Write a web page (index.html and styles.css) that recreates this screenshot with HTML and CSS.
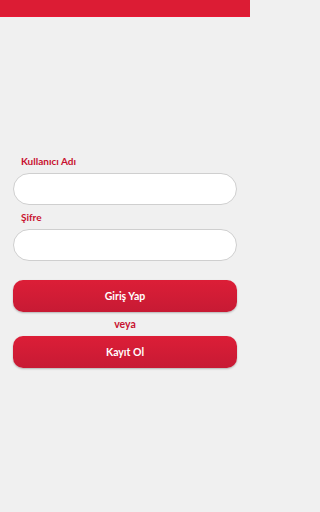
FILE: index.html
```html
<!DOCTYPE html>
<html lang="tr">
<head>
<meta charset="utf-8">
<meta name="viewport" content="width=device-width, initial-scale=1">
<link rel="stylesheet" href="styles.css">
</head>
<body>
<div class="page">
  <header class="topbar"></header>
  <main class="form">
    <label class="label" for="user">Kullanıcı Adı</label>
    <input class="field" id="user" type="text">
    <label class="label label-2" for="pass">Şifre</label>
    <input class="field" id="pass" type="password">
    <button class="btn btn-login">Giriş Yap</button>
    <div class="or">veya</div>
    <button class="btn">Kayıt Ol</button>
  </main>
</div>
</body>
</html>
```
FILE: styles.css
```css
html, body {
  margin: 0;
  padding: 0;
  background: #f0f0f0;
  height: 100%;
}
body {
  font-family: "Lato", "Open Sans", sans-serif;
}
.page {
  width: 250px;
  min-height: 100%;
}
.topbar {
  height: 16px;
  background: #dc1c34;
  border-bottom: 1px solid #ea1836;
}
.form {
  display: flex;
  flex-direction: column;
  margin: 0 13px;
  padding-top: 137px;
}
.label {
  display: block;
  padding-left: 8px;
  font-size: 10px;
  line-height: 14px;
  font-weight: 700;
  color: #c8102e;
  margin-bottom: 5px;
}
.label-2 {
  margin-top: 5px;
}
.field {
  box-sizing: border-box;
  height: 32px;
  width: 100%;
  margin: 0;
  border: 1px solid #cfcfcf;
  border-radius: 16px;
  background: #fff;
  outline: none;
}
.btn {
  box-sizing: border-box;
  height: 32px;
  width: 100%;
  margin: 0;
  border: none;
  border-radius: 10px;
  background: linear-gradient(#dc1e37, #c71a34);
  color: #fff;
  font-family: inherit;
  font-size: 10.5px;
  font-weight: 700;
  box-shadow: 0 1px 2px rgba(0,0,0,0.25);
}
.btn-login {
  margin-top: 19px;
}
.or {
  height: 24px;
  line-height: 24px;
  text-align: center;
  font-size: 10.5px;
  font-weight: 700;
  color: #c8102e;
}
```
